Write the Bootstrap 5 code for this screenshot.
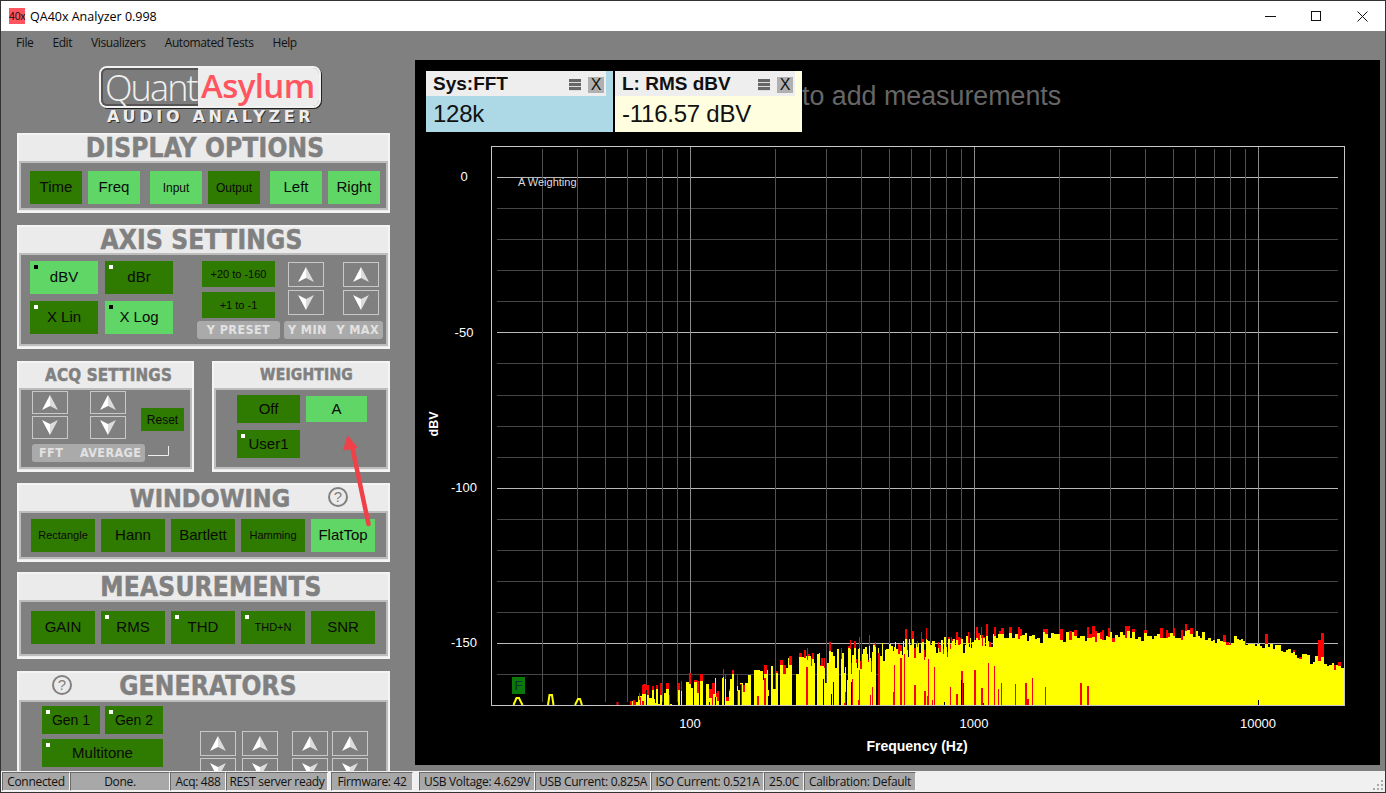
<!DOCTYPE html>
<html lang="en">
<head>
<meta charset="utf-8">
<title>QA40x Analyzer 0.998</title>
<link href="https://cdn.jsdelivr.net/npm/bootstrap@5.3.0/dist/css/bootstrap.min.css" rel="stylesheet">
<style>
html,body{margin:0;height:793px;overflow:hidden;background:#808080}
body{font-family:"Liberation Sans",Arial,sans-serif;color:#000}
.qa-app{width:1386px;height:793px;position:relative;border-left:1px solid #333;border-right:1px solid #333;border-top:1px solid #333;border-bottom:1px solid #333;overflow:hidden}
.qa-title{height:30px;background:#fff;font:12.5px "Open Sans",sans-serif;flex:none}
.qa-ico{width:16px;height:16px;background:#ff5560;font:10.5px/16px "Liberation Sans",sans-serif;margin-left:8px;margin-right:5px;color:#111;white-space:nowrap;letter-spacing:-.2px}
.qa-winbtn{width:46px;height:30px}
.qa-work{height:740px;flex:none}
.qa-side{width:414px;flex:none;overflow:hidden;padding-left:16px}
.qa-menu{height:24px;gap:19px;font:12px/24px "Open Sans",sans-serif;letter-spacing:-.4px;margin-left:-1px;color:#111;margin-bottom:11px}
.qa-logo{width:222px;height:42px;margin-left:82px;border:2px solid #f2f2f2;border-radius:8px;box-shadow:1px 1px 0 #222}
.qa-logo-l{width:97px;height:38px;font:300 36px/36px "Open Sans",sans-serif;color:#f0f0f0;letter-spacing:-1.9px;padding-left:2px;background:#7c7c7c;border:2px solid #555;border-right:0;border-radius:6px 0 0 6px}
.qa-logo-r{flex:1;height:38px;background:#ededed;font:600 33px/36px "Open Sans",sans-serif;color:#ff5560;letter-spacing:-.6px;padding-left:3px;border-radius:0 6px 6px 0}
.qa-sub{margin:1px 0 9px 90px;height:15px;font:bold 16px/15px "DejaVu Sans",sans-serif;letter-spacing:3.7px;color:#eee;text-shadow:1px 1px 0 #333;white-space:nowrap}
.qa-panel{width:373px;background:#ebebeb;border:2px solid #f4f4f4;position:relative}
.qa-head{font-family:"DejaVu Sans Condensed","DejaVu Sans",sans-serif;font-weight:700;color:#808080;-webkit-text-stroke:.5px #808080;font-size:26px;line-height:27px;height:26px;text-align:center;letter-spacing:.2px;white-space:nowrap}
.qa-inner{background:#808080;border:2px solid #bdbdbd;margin:0 0 1px 0}
.qa-b{position:relative;background:#2f7a00;color:#0a0a0a;border:0;border-radius:0;padding:0;font-size:15px;display:flex;align-items:center;justify-content:center;flex:none}
.qa-b.qa-on{background:#5fd665}
.qa-b.qa-sm{font-size:12px}
.qa-b.qa-xs{font-size:11px}
.qa-b.qa-led::before{content:"";position:absolute;left:4px;top:4px;width:4px;height:4px;background:#fff}
.qa-b.qa-led.qa-on::before{background:#000}
.qa-w52{width:52px;height:33px}
.qa-w68{width:68px;height:33px}
.qa-w64{width:64px;height:33px}
.qa-arr{width:36px;height:25px;border:1px solid #c8c8c8;display:flex;align-items:center;justify-content:center;flex:none}
.qa-arr svg{width:18px;height:17px}
.qa-pill{height:18px;background:#aaa;border-radius:3px;color:#e2e2e2;font:bold 12.5px/18px "DejaVu Sans Condensed","DejaVu Sans",sans-serif;letter-spacing:.4px;white-space:nowrap}
.qa-help{position:absolute;width:20px;height:20px;border:2px solid #808080;border-radius:50%;color:#808080;font:15px/16px "Liberation Sans",sans-serif;text-align:center}
.qa-plot{flex:none;width:965px;height:705px;margin-top:29px;background:#000}
.qa-tiles{padding:11px 0 0 11px;height:72px;flex:none}
.qa-tile{width:187px;height:61px;position:relative}
.qa-tile-h{width:180px;height:25px;background:#eee;font:bold 19px/25px "Liberation Sans",sans-serif;padding-left:7px;color:#111}
.qa-tile-v{font:24px/36px "Liberation Sans",sans-serif;padding-left:7px;color:#111;letter-spacing:-.25px}
.qa-tl-blue{background:#add8e6}
.qa-tl-yel{background:#ffffe0}
.qa-menuic{position:absolute;left:143px;top:8px;width:12px;height:12px;background:repeating-linear-gradient(#666 0 3px,#ddd 3px 4px)}
.qa-x{position:absolute;left:162px;top:6px;width:16px;height:16px;background:#b0b0b0;font:16px/16px "Liberation Sans",sans-serif;text-align:center;color:#111}
.qa-hint{font:26.8px/50px "Liberation Sans",sans-serif;color:#666;white-space:nowrap;height:50px}
.qa-status{position:absolute;left:0;bottom:0;width:100%;height:21px;background:#f0f0f0;padding:1px 1px;font:12px/18px "Open Sans",sans-serif;color:#111}
.qa-cell{background:#a8a8a8;height:19px;border:1px solid;border-color:#6a6a6a #f4f4f4 #f4f4f4 #6a6a6a;text-align:center;white-space:nowrap;overflow:hidden;flex:none;letter-spacing:-.3px}
svg text{font-family:"Liberation Sans",sans-serif}
.qa-arrow{position:absolute;left:330px;top:430px;pointer-events:none}
.ms-6px{margin-left:6px}.ms-10px{margin-left:10px}
.flex-none{flex:none}
.qa-gap12{margin-top:12px}.qa-gap11{margin-top:11px}.qa-gap10{margin-top:10px}
.qa-pad-display{padding:8px 0 4px 9px;height:49px}
.qa-pad-axis{padding:6px 0 0 9px;height:93px}
.qa-grid2{display:grid;grid-template-columns:68px 68px;gap:7px;align-content:start}
.qa-preset{margin-left:24px;width:83px;align-items:center}
.qa-preset-b{width:73px;height:26px}
.qa-mt5{margin-top:5px}
.qa-p1{width:83px;margin-top:3px}
.qa-ymm{margin-left:4px;padding-top:1px;width:100px}
.qa-ymm .d-flex.qa-g19{padding-left:4px}
.qa-g19{gap:19px}.qa-g3{gap:3px}.qa-g2{gap:2px}
.qa-p2{width:99px;margin-top:6px;padding:0 4px}
.qa-two{width:373px;gap:18px}
.qa-half1{width:177px}.qa-half2{width:178px}
.qa-acqh{font-size:16.8px;height:25px;line-height:25px;padding-left:6px}
.qa-wgh{font-size:15.5px;height:25px;line-height:25px;padding-left:11px}
.qa-pad-acq{padding:1px 0 0 11px;height:81px}
.qa-pad-w{padding:5px 0 0 21px;height:81px}
.qa-ml22{margin-left:22px}
.qa-arr23{height:23px}
.qa-reset{width:43px;height:23px;margin:17px 0 0 15px}
.qa-mt4{margin-top:5px}
.qa-p3{width:113px;padding-left:7px}
.qa-fft{width:35px}.qa-avg{padding-left:6px}
.qa-brack{margin:2px 0 0 3px}
.qa-off{width:63px;height:28px}
.qa-a{width:61px;height:26px;margin-left:6px}
.qa-mt7{margin-top:7px}
.qa-row5{gap:6px}
.qa-pad-win{padding:6px 0 0 10px;height:48px}
.qa-pad-meas{padding:9px 0 0 10px;height:56px}
.qa-h1{left:309px;top:2px}
.qa-h2{left:33px;top:2px}
.qa-hdw{padding-left:13px;font-size:25px;letter-spacing:0}
.qa-hdm{padding-left:15px}
.qa-hdg{padding-left:9px;height:27px}
.qa-hdd{padding-left:3px}
.qa-hda{padding-right:4px}
.qa-pad-gen{padding:4px 0 0 21px;height:90px}
.qa-gen{display:grid;grid-template-columns:58px 58px;gap:5px;align-content:start}
.qa-g1{width:58px;height:28px;font-size:14px}
.qa-multi{grid-column:span 2;height:28px}
.qa-gen-arr{margin:25px 0 0 37px;gap:6px}
.qa-ml8{margin-left:8px}.qa-mln2{margin-left:-2px}
.qa-ml2{margin-left:2px}
.qa-s1{width:68px}.qa-s2{width:100px}.qa-s3{width:56px}.qa-s4{width:102px;margin-right:3px}.qa-s5{width:82px;margin-right:6px}.qa-s6{width:116px}.qa-s7{width:113px}.qa-s8{width:40px}.qa-s9{width:112px}
</style>
</head>
<body>
<div class="qa-app d-flex flex-column">
  <div class="qa-title d-flex align-items-center">
    <span class="qa-ico">40x</span><span>QA40x Analyzer 0.998</span>
    <span class="ms-auto d-flex">
      <span class="qa-winbtn d-flex align-items-center justify-content-center"><svg width="11" height="11"><path d="M0 5.5H11" stroke="#111"/></svg></span>
      <span class="qa-winbtn d-flex align-items-center justify-content-center"><svg width="11" height="11"><rect x=".5" y=".5" width="9" height="9" fill="none" stroke="#111"/></svg></span>
      <span class="qa-winbtn d-flex align-items-center justify-content-center"><svg width="11" height="11"><path d="M.5.5L10.5 10.5M10.5.5L.5 10.5" stroke="#111"/></svg></span>
    </span>
  </div>
  <div class="qa-work d-flex">
    <div class="qa-side">
      <div class="qa-menu d-flex"><span>File</span><span>Edit</span><span>Visualizers</span><span>Automated Tests</span><span>Help</span></div>
      <div class="qa-logo d-flex"><div class="qa-logo-l">Quant</div><div class="qa-logo-r">Asylum</div></div>
      <div class="qa-sub">AUDIO ANALYZER</div>

      <div class="qa-panel">
        <div class="qa-head qa-hdd">DISPLAY OPTIONS</div>
        <div class="qa-inner d-flex qa-pad-display">
          <button class="qa-b qa-w52">Time</button><button class="qa-b qa-w52 qa-on ms-6px">Freq</button>
          <button class="qa-b qa-w52 qa-on qa-sm ms-10px">Input</button><button class="qa-b qa-w52 qa-sm ms-6px">Output</button>
          <button class="qa-b qa-w52 qa-on ms-10px">Left</button><button class="qa-b qa-w52 qa-on ms-6px">Right</button>
        </div>
      </div>

      <div class="qa-panel qa-gap12">
        <div class="qa-head qa-hda">AXIS SETTINGS</div>
        <div class="qa-inner d-flex qa-pad-axis">
          <div class="qa-grid2">
            <button class="qa-b qa-w68 qa-led qa-on">dBV</button><button class="qa-b qa-w68 qa-led">dBr</button>
            <button class="qa-b qa-w68 qa-led">X Lin</button><button class="qa-b qa-w68 qa-led qa-on">X Log</button>
          </div>
          <div class="qa-preset d-flex flex-column">
            <button class="qa-b qa-preset-b qa-xs">+20 to -160</button>
            <button class="qa-b qa-preset-b qa-xs qa-mt5">+1 to -1</button>
            <div class="qa-pill qa-p1 text-center">Y PRESET</div>
          </div>
          <div class="qa-ymm">
            <div class="d-flex qa-g19">
              <div class="d-flex flex-column qa-g3"><span class="qa-arr"><svg viewBox="0 0 18 17"><use href="#qaUp"/></svg></span><span class="qa-arr"><svg viewBox="0 0 18 17"><use href="#qaDn"/></svg></span></div>
              <div class="d-flex flex-column qa-g3"><span class="qa-arr"><svg viewBox="0 0 18 17"><use href="#qaUp"/></svg></span><span class="qa-arr"><svg viewBox="0 0 18 17"><use href="#qaDn"/></svg></span></div>
            </div>
            <div class="qa-pill qa-p2 d-flex justify-content-between"><span>Y MIN</span><span>Y MAX</span></div>
          </div>
        </div>
      </div>

      <div class="d-flex qa-gap12 qa-two">
        <div class="qa-panel qa-half1">
          <div class="qa-head qa-acqh">ACQ SETTINGS</div>
          <div class="qa-inner qa-pad-acq">
            <div class="d-flex">
              <div class="d-flex flex-column qa-g2"><span class="qa-arr qa-arr23"><svg viewBox="0 0 18 17"><use href="#qaUp"/></svg></span><span class="qa-arr qa-arr23"><svg viewBox="0 0 18 17"><use href="#qaDn"/></svg></span></div>
              <div class="d-flex flex-column qa-g2 qa-ml22"><span class="qa-arr qa-arr23"><svg viewBox="0 0 18 17"><use href="#qaUp"/></svg></span><span class="qa-arr qa-arr23"><svg viewBox="0 0 18 17"><use href="#qaDn"/></svg></span></div>
              <button class="qa-b qa-sm qa-reset">Reset</button>
            </div>
            <div class="d-flex qa-mt4">
              <div class="qa-pill qa-p3 d-flex"><span class="qa-fft">FFT</span><span class="qa-avg">AVERAGE</span></div>
              <svg width="22" height="10" class="qa-brack"><path d="M0 9.5H20.5V0" fill="none" stroke="#eee"/></svg>
            </div>
          </div>
        </div>
        <div class="qa-panel qa-half2">
          <div class="qa-head qa-wgh">WEIGHTING</div>
          <div class="qa-inner qa-pad-w">
            <div class="d-flex align-items-center">
              <button class="qa-b qa-off">Off</button><button class="qa-b qa-on qa-a">A</button>
            </div>
            <button class="qa-b qa-led qa-off qa-mt7">User1</button>
          </div>
        </div>
      </div>

      <div class="qa-panel qa-gap11">
        <div class="qa-head qa-hdw">WINDOWING</div>
        <span class="qa-help qa-h1">?</span>
        <div class="qa-inner d-flex qa-row5 qa-pad-win">
          <button class="qa-b qa-w64 qa-xs">Rectangle</button><button class="qa-b qa-w64">Hann</button><button class="qa-b qa-w64">Bartlett</button><button class="qa-b qa-w64 qa-xs">Hamming</button><button class="qa-b qa-w64 qa-on">FlatTop</button>
        </div>
      </div>

      <div class="qa-panel qa-gap10">
        <div class="qa-head qa-hdm">MEASUREMENTS</div>
        <div class="qa-inner d-flex qa-row5 qa-pad-meas">
          <button class="qa-b qa-w64">GAIN</button><button class="qa-b qa-w64 qa-led">RMS</button><button class="qa-b qa-w64 qa-led">THD</button><button class="qa-b qa-w64 qa-led qa-xs">THD+N</button><button class="qa-b qa-w64">SNR</button>
        </div>
      </div>

      <div class="qa-panel qa-gap12">
        <div class="qa-head qa-hdg">GENERATORS</div>
        <span class="qa-help qa-h2">?</span>
        <div class="qa-inner d-flex qa-pad-gen">
          <div class="qa-gen">
            <button class="qa-b qa-led qa-g1">Gen 1</button><button class="qa-b qa-led qa-g1">Gen 2</button>
            <button class="qa-b qa-led qa-multi">Multitone</button>
          </div>
          <div class="d-flex qa-gen-arr">
            <div class="d-flex flex-column qa-g2"><span class="qa-arr"><svg viewBox="0 0 18 17"><use href="#qaUp"/></svg></span><span class="qa-arr"><svg viewBox="0 0 18 17"><use href="#qaDn"/></svg></span></div>
            <div class="d-flex flex-column qa-g2"><span class="qa-arr"><svg viewBox="0 0 18 17"><use href="#qaUp"/></svg></span><span class="qa-arr"><svg viewBox="0 0 18 17"><use href="#qaDn"/></svg></span></div>
            <div class="d-flex flex-column qa-g2 qa-ml8"><span class="qa-arr"><svg viewBox="0 0 18 17"><use href="#qaUp"/></svg></span><span class="qa-arr"><svg viewBox="0 0 18 17"><use href="#qaDn"/></svg></span></div>
            <div class="d-flex flex-column qa-g2 qa-mln2"><span class="qa-arr"><svg viewBox="0 0 18 17"><use href="#qaUp"/></svg></span><span class="qa-arr"><svg viewBox="0 0 18 17"><use href="#qaDn"/></svg></span></div>
          </div>
        </div>
      </div>
    </div>

    <div class="qa-plot d-flex flex-column">
      <div class="qa-tiles d-flex">
        <div class="qa-tile qa-tl-blue"><div class="qa-tile-h">Sys:FFT</div><span class="qa-menuic"></span><span class="qa-x">X</span><div class="qa-tile-v">128k</div></div>
        <div class="qa-tile qa-tl-yel qa-ml2"><div class="qa-tile-h">L: RMS dBV</div><span class="qa-menuic"></span><span class="qa-x">X</span><div class="qa-tile-v">-116.57 dBV</div></div>
        <div class="qa-hint">to add measurements</div>
      </div>
      <svg id="qaChart" width="965" height="633" viewBox="415 132 965 633" class="d-block flex-none"></svg>
    </div>
  </div>

  <div class="qa-status d-flex">
    <div class="qa-cell qa-s1">Connected</div><div class="qa-cell qa-s2">Done.</div><div class="qa-cell qa-s3">Acq: 488</div><div class="qa-cell qa-s4">REST server ready</div><div class="qa-cell qa-s5">Firmware: 42</div><div class="qa-cell qa-s6">USB Voltage: 4.629V</div><div class="qa-cell qa-s6">USB Current: 0.825A</div><div class="qa-cell qa-s7">ISO Current: 0.521A</div><div class="qa-cell qa-s8">25.0C</div><div class="qa-cell qa-s9">Calibration: Default</div>
    <svg class="ms-auto align-self-end" width="12" height="12"><path d="M9 1h2v2H9zM5 5h2v2H5zM9 5h2v2H9zM1 9h2v2H1zM5 9h2v2H5zM9 9h2v2H9z" fill="#aaa"/></svg>
  </div>

  <svg class="qa-arrow" width="50" height="100" viewBox="330 430 50 100"><path d="M367.5 523L351 445" stroke="#f04048" stroke-width="4.5" stroke-linecap="round"/><path d="M346.5 434L357 447L342 449.5Z" fill="#f04048"/></svg>
</div>

<svg width="0" height="0" class="position-absolute"><defs>
  <g id="qaUp"><path d="M9 1L1 16L9 12Z" fill="#fff"/><path d="M9 1L17 16L9 12Z" fill="#dcdcdc"/></g>
  <g id="qaDn"><path d="M9 16L1 1L9 5Z" fill="#fff"/><path d="M9 16L17 1L9 5Z" fill="#dcdcdc"/></g>
</defs></svg>

<script>
(function(){
  var s='',X=function(f){return 690+284*Math.log10(f/100)};
  var decs=[10,100,1000,10000];
  for(var d=0;d>=-160;d-=10){
    var y=177+d*-3.108;
    var maj=d%50===0;
    s+='<line x1="497" x2="1338" y1="'+(Math.round(y)+.5)+'" y2="'+(Math.round(y)+.5)+'" stroke="'+(maj?'#b8b8b8':'#454545')+'"/>';
  }
  decs.forEach(function(b){for(var m=1;m<10;m++){var f=b*m;if(f<=20||f>=20000)continue;var x=Math.round(X(f))+.5,maj=m===1;
    s+='<line x1="'+x+'" x2="'+x+'" y1="'+(maj?146:149)+'" y2="702" stroke="'+(maj?'#8a8a8a':'#505050')+'"/>';}});
  var seed=12345;function R(){seed|=0;seed=seed+0x6D2B79F5|0;var t=Math.imul(seed^seed>>>15,1|seed);t=t+Math.imul(t^t>>>7,61|t)^t;return((t^t>>>14)>>>0)/4294967296}
  var E=[[600,705],[618,703],[625,705],[632,697],[643,693],[650,690],[663,683],[672,692],[677,685],[690,680],[708,678],[725,675],[737,670],[763,668],[773,662],[797,655],[813,652],[840,648],[860,645],[880,641],[913,638],[960,636],[1000,633],[1200,632],[1258,642],[1297,650],[1320,658],[1344,666]];
  function env(x){for(var i=1;i<E.length;i++){if(x<=E[i][0]){var a=E[i-1],b=E[i];return a[1]+(b[1]-a[1])*(x-a[0])/(b[0]-a[0])}}return 665}
  var red='',yel='',over='',blk='';
  function bar(x,w,t){return 'M'+x+' 705V'+Math.round(t)+'H'+(x+w)+'V705Z'}
  var x=630;
  while(x<1344){
    var w=x>1000?2+Math.floor(R()*2):(x<800?1+Math.floor(R()*3):1+Math.floor(R()*2));
    if(x+w>1344)w=1344-x;
    var e=env(x),h=705-e;
    var k=x<700?.9:x<900?.9-(x-700)/200*.5:x<1030?.4-(x-900)/130*.3:.06;
    var yt=e+Math.pow(R(),2)*h*k+(x>1000?R()*9-2:R()*3);
    var gap=x<660?.5:x<700?.32:x<800?.18:x<900?.07:0;
    if(R()<gap){x+=w;continue}
    var rt=yt-(R()<(x<1000?.5:.36)?R()*(x<1300?11:(x>1310&&x<1322?24:5))+1:0);
    if(x<720&&R()<.3)rt=yt-R()*12;
    if(rt<705)red+=bar(x,w,rt);
    if(yt<705)yel+=bar(x,w,yt);
    var pLine=x<1000?.24:x<1050?.2:x<1110?.05:0;
    if(R()<pLine){var top=x<1000?705-R()*h*.85:x<1050?705-R()*28-5:705-R()*20-5;over+=bar(x,1+Math.floor(R()*2),top)}
    if(x<1020&&R()<.08){blk+='M'+x+'.5 705V'+(705-R()*26).toFixed(0)}
    x+=w;
  }
  s+='<path d="'+red+'" fill="#f00" shape-rendering="crispEdges"/>';
  s+='<path d="'+yel+'" fill="#ff0" shape-rendering="crispEdges"/>';
  s+='<path d="'+over+'" fill="#f00" shape-rendering="crispEdges"/>';
  s+='<path d="'+blk+'M1258.5 705V700" stroke="#000" fill="none" shape-rendering="crispEdges"/>';
  s+='<path d="M513.5 705L516.5 698H519L522.5 705M548 705L549.5 695H552L553.5 705M575 705L578 699H580L582 705" fill="none" stroke="#ff0" stroke-width="2"/><path d="M617.5 705V702" stroke="#f00" stroke-width="2"/>';
  s+='<rect x="491.5" y="146.5" width="853" height="559" fill="none" stroke="#c8c8c8"/>';
  [[0,176],[-50,332],[-100,487],[-150,642]].forEach(function(a){s+='<text x="464" y="'+(a[1]+5)+'" fill="#fff" font-size="13" text-anchor="middle">'+a[0]+'</text>'});
  [[100,690],[1000,974],[10000,1258]].forEach(function(a){s+='<text x="'+a[1]+'" y="728" fill="#fff" font-size="13" text-anchor="middle">'+a[0]+'</text>'});
  s+='<text x="917" y="751" fill="#fff" font-size="14" font-weight="700" text-anchor="middle">Frequency (Hz)</text>';
  s+='<text transform="translate(438 424) rotate(-90)" fill="#fff" font-size="12.5" font-weight="700" text-anchor="middle">dBV</text>';
  s+='<text x="518" y="186" fill="#ddd" font-size="11">A Weighting</text>';
  s+='<rect x="512" y="677" width="13" height="17" fill="#0a780a"/><text x="518.5" y="690" fill="#033" font-size="13" text-anchor="middle">F</text>';
  document.getElementById('qaChart').innerHTML=s;
})();
</script>
</body>
</html>
